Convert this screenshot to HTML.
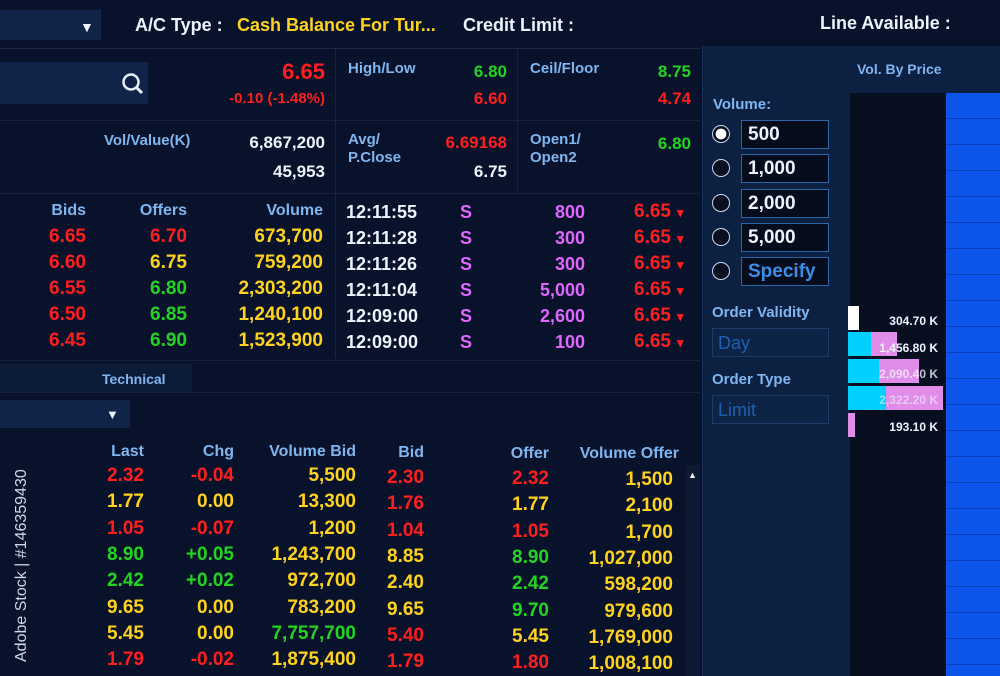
<!DOCTYPE html>
<html><head><meta charset="utf-8"><style>
*{margin:0;padding:0;box-sizing:border-box}
body{width:1000px;height:676px;overflow:hidden;background:#08122a;font-family:"Liberation Sans",sans-serif;font-weight:bold;position:relative}
.t{position:absolute;white-space:nowrap;font-size:18px;line-height:20px}
.r{color:#ff1e1e}.y{color:#ffd21e}.g{color:#22d422}.w{color:#eef3ff}.m{color:#e066ff}.b{color:#7fb6f0;font-size:15px}
.box{position:absolute}
</style></head><body>
<div class="box" style="left:0;top:10px;width:101px;height:30px;background:#0f2448"></div>
<div class="box" style="left:0;top:62px;width:148px;height:42px;background:#0f2448"></div>
<div class="box" style="left:0;top:48px;width:700px;height:1px;background:#1a2a48"></div>
<div class="box" style="left:0;top:120px;width:700px;height:1px;background:#15233e"></div>
<div class="box" style="left:0;top:193px;width:700px;height:1px;background:#15233e"></div>
<div class="box" style="left:0;top:360px;width:700px;height:1px;background:#15233e"></div>
<div class="box" style="left:0;top:392px;width:700px;height:1px;background:#15233e"></div>
<div class="box" style="left:335px;top:48px;width:1px;height:310px;background:#15233e"></div>
<div class="box" style="left:517px;top:48px;width:1px;height:145px;background:#15233e"></div>
<div class="box" style="left:0;top:364px;width:192px;height:28px;background:#0c1b38"></div>
<div class="box" style="left:0;top:400px;width:130px;height:28px;background:#0f2448"></div>
<div class="box" style="left:686px;top:465px;width:14px;height:211px;background:#0c1a34"></div>
<div class="box" style="left:702px;top:46px;width:298px;height:630px;background:#0c2042;border-left:1px solid #183058"></div>
<div class="box" style="left:850px;top:93px;width:96px;height:583px;background:#070e20"></div>
<div class="box" style="left:946px;top:93px;width:54px;height:583px;background:repeating-linear-gradient(#0b55ea 0 25px,#0640b8 25px 26px)"></div>
<div class="t w" style="left:80px;top:17px;font-size:14px">▼</div>
<div class="t w" style="left:135px;top:15px">A/C Type :</div>
<div class="t y" style="left:237px;top:15px">Cash Balance For Tur...</div>
<div class="t w" style="left:463px;top:15px">Credit Limit :</div>
<div class="t w" style="left:820px;top:13px">Line Available :</div>
<svg class="box" style="left:120px;top:71px" width="26" height="26"><circle cx="11" cy="11" r="7.5" fill="none" stroke="#e8f0ff" stroke-width="2.5"/><line x1="16.5" y1="16.5" x2="22" y2="22" stroke="#e8f0ff" stroke-width="3"/></svg>
<div class="t r" style="right:675px;top:60px;font-size:22px;line-height:24px">6.65</div>
<div class="t r" style="right:675px;top:89px;font-size:15px">-0.10 (-1.48%)</div>
<div class="t b" style="left:348px;top:59px">High/Low</div>
<div class="t g" style="right:493px;top:62px;font-size:17px">6.80</div>
<div class="t r" style="right:493px;top:89px;font-size:17px">6.60</div>
<div class="t b" style="left:530px;top:59px">Ceil/Floor</div>
<div class="t g" style="right:309px;top:62px;font-size:17px">8.75</div>
<div class="t r" style="right:309px;top:89px;font-size:17px">4.74</div>
<div class="t b" style="left:104px;top:131px">Vol/Value(K)</div>
<div class="t w" style="right:675px;top:133px;font-size:17px">6,867,200</div>
<div class="t w" style="right:675px;top:162px;font-size:17px">45,953</div>
<div class="t b" style="left:348px;top:131px;line-height:18px">Avg/<br>P.Close</div>
<div class="t r" style="right:493px;top:133px;font-size:17px">6.69168</div>
<div class="t w" style="right:493px;top:162px;font-size:17px">6.75</div>
<div class="t b" style="left:530px;top:131px;line-height:18px">Open1/<br>Open2</div>
<div class="t g" style="right:309px;top:134px;font-size:17px">6.80</div>
<div class="t b" style="right:914px;top:201px;font-size:16px">Bids</div>
<div class="t b" style="right:813px;top:201px;font-size:16px">Offers</div>
<div class="t b" style="right:677px;top:201px;font-size:16px">Volume</div>
<div class="t b" style="left:102px;top:369px;font-size:14px">Technical</div>
<div class="t w" style="left:106px;top:405px;font-size:13px">▼</div>
<div class="t b" style="right:856px;top:442px;font-size:16px">Last</div>
<div class="t b" style="right:766px;top:442px;font-size:16px">Chg</div>
<div class="t b" style="right:644px;top:442px;font-size:16px">Volume Bid</div>
<div class="t b" style="right:576px;top:443px;font-size:16px">Bid</div>
<div class="t b" style="right:451px;top:444px;font-size:16px">Offer</div>
<div class="t b" style="right:321px;top:444px;font-size:16px">Volume Offer</div>
<div class="t w" style="left:688px;top:465px;font-size:9px">▲</div>
<div class="t b" style="left:857px;top:59px;font-size:14px">Vol. By Price</div>
<div class="t b" style="left:713px;top:95px">Volume:</div>
<div class="t b" style="left:712px;top:303px">Order Validity</div>
<div class="box" style="left:712px;top:328px;width:117px;height:29px;border:1px solid #1c3c6c;background:#0d2446"></div>
<div class="t" style="left:718px;top:333px;color:#1f5fb0;font-size:18px;font-weight:normal">Day</div>
<div class="t b" style="left:712px;top:370px">Order Type</div>
<div class="box" style="left:712px;top:395px;width:117px;height:29px;border:1px solid #1c3c6c;background:#0d2446"></div>
<div class="t" style="left:718px;top:400px;color:#1f5fb0;font-size:18px;font-weight:normal">Limit</div>
<div class="box" style="left:848px;top:306px;width:11px;height:24px;background:#fff"></div>
<div class="box" style="left:848px;top:332px;width:23px;height:24px;background:#00d0ff"></div><div class="box" style="left:871px;top:332px;width:26px;height:24px;background:#e08ce8"></div>
<div class="box" style="left:848px;top:359px;width:31px;height:24px;background:#00d0ff"></div><div class="box" style="left:879px;top:359px;width:40px;height:24px;background:#e08ce8"></div>
<div class="box" style="left:848px;top:386px;width:38px;height:24px;background:#00d0ff"></div><div class="box" style="left:886px;top:386px;width:57px;height:24px;background:#e08ce8"></div>
<div class="box" style="left:848px;top:413px;width:7px;height:24px;background:#e08ce8"></div>
<div class="t w" style="right:62px;top:311px;font-size:12px">304.70 K</div>
<div class="t w" style="right:62px;top:338px;font-size:12px">1,456.80 K</div>
<div class="t w" style="right:62px;top:364px;font-size:12px;opacity:.8">2,090.40 K</div>
<div class="t w" style="right:62px;top:390px;font-size:12px;opacity:.6">2,322.20 K</div>
<div class="t w" style="right:62px;top:417px;font-size:12px">193.10 K</div>
<div class="t" style="left:12px;top:662px;transform:rotate(-90deg);transform-origin:0 0;color:#cfd6e4;font-size:16px;font-weight:normal">Adobe Stock | #146359430</div>
<script>
function T(p,cls,l,r,top,txt,fs){var d=document.createElement('div');d.className='t '+cls;d.style.top=top+'px';if(l!=null)d.style.left=l+'px';else d.style.right=(1000-r)+'px';if(fs)d.style.fontSize=fs+'px';d.textContent=txt;p.appendChild(d);}
var B=document.body;
var bids=[["r6.65","r6.70","y673,700"],["r6.60","y6.75","y759,200"],["r6.55","g6.80","y2,303,200"],["r6.50","g6.85","y1,240,100"],["r6.45","g6.90","y1,523,900"]];
bids.forEach(function(r,i){var y=227+i*26;T(B,r[0][0],null,86,y,r[0].slice(1),19);T(B,r[1][0],null,187,y,r[1].slice(1),19);T(B,r[2][0],null,323,y,r[2].slice(1),19);});
[["12:11:55","800"],["12:11:28","300"],["12:11:26","300"],["12:11:04","5,000"],["12:09:00","2,600"],["12:09:00","100"]].forEach(function(r,i){var y=202+i*26;
T(B,'w',346,null,y,r[0],18);T(B,'m',460,null,y,'S',18);T(B,'m',null,585,y,r[1],18);T(B,'r',null,671,y,'6.65',19);T(B,'r',677,null,y+1,'▾',13);});
var bot=[["r2.32","r-0.04","y5,500","r2.30","r2.32","y1,500"],["y1.77","y0.00","y13,300","r1.76","y1.77","y2,100"],["r1.05","r-0.07","y1,200","r1.04","r1.05","y1,700"],["g8.90","g+0.05","y1,243,700","y8.85","g8.90","y1,027,000"],["g2.42","g+0.02","y972,700","y2.40","g2.42","y598,200"],["y9.65","y0.00","y783,200","y9.65","g9.70","y979,600"],["y5.45","y0.00","g7,757,700","r5.40","y5.45","y1,769,000"],["r1.79","r-0.02","y1,875,400","r1.79","r1.80","y1,008,100"]];
var xs=[144,234,356,424,549,673],dy=[0,0,0,2,3,4];
bot.forEach(function(r,i){var y=466+i*26.3;r.forEach(function(c,j){T(B,c[0],null,xs[j],Math.round(y+dy[j]),c.slice(1),19);});});
["500","1,000","2,000","5,000","Specify"].forEach(function(v,i){var y=120+i*34.3;
var c=document.createElement('div');c.className='box';c.style.cssText='left:712px;top:'+(y+5)+'px;width:18px;height:18px;border-radius:50%;border:1.5px solid #c8d8f0;background:'+(i==0?'radial-gradient(#fff 45%,#081020 50%)':'#081020');B.appendChild(c);
var b=document.createElement('div');b.className='box';b.style.cssText='left:741px;top:'+y+'px;width:88px;height:29px;border:1.5px solid #2c64a8;background:#050c1c';B.appendChild(b);
T(B,i==4?'':'w',748,null,y+5,v,19);if(i==4)B.lastChild.style.color='#3a8ee8';});
</script>
</body></html>
